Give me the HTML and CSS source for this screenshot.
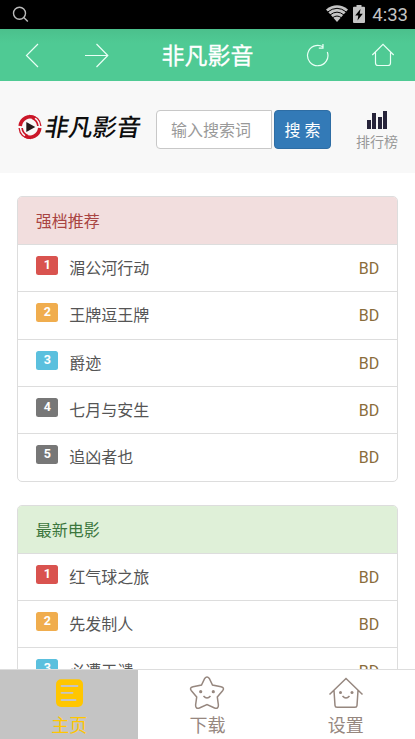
FILE: index.html
```html
<!DOCTYPE html>
<html lang="zh-CN">
<head>
<meta charset="utf-8">
<meta name="viewport" content="width=device-width, initial-scale=1">
<title>非凡影音</title>
<link rel="stylesheet" href="styles.css">
</head>
<body>
<div class="app">
  <header class="status">
    <svg class="status-search" width="18" height="18" viewBox="0 0 18 18"><circle cx="7.500" cy="7.200" r="6" /><path d="M11.800 11.500L15.800 15.400" /></svg>
    <div class="status-right">
      <svg width="22" height="17" viewBox="0 0 22 17">
        <path fill="#c4c4c4" d="M0 4.500Q11-3.800 22 4.500L11 17Z"/>
        <path fill="none" stroke="#000" stroke-width="1" d="M1.500 7.100Q11-.500 20.500 7.100M4 10Q11 4.300 18 10M6.500 12.800Q11 9.300 15.500 12.800"/>
      </svg>
      <svg class="battery" width="12" height="18" viewBox="0 0 12 18">
        <path fill="#c4c4c4" d="M3.500 0H8.500V1.700H11Q12 1.700 12 2.700V17Q12 18 11 18H1Q0 18 0 17V2.700Q0 1.700 1 1.700H3.500Z"/>
        <path fill="#000" d="M7.500 4L2.200 10.500H5.300L4.500 15.500L9.800 8.800H6.700Z"/>
      </svg>
      <span class="clock">4:33</span>
    </div>
  </header>

  <nav class="topbar">
    <div class="topbar-side">
      <svg width="16" height="26" viewBox="0 0 16 26"><path d="M14 2L2.500 13.500L14 25"/></svg>
      <svg class="forward" width="26" height="26" viewBox="0 0 26 26"><path d="M1 13.500H24M12.500 2L23.800 13.500L12.500 25"/></svg>
    </div>
    <h1>非凡影音</h1>
    <div class="topbar-side topbar-end">
      <svg width="24" height="26" viewBox="0 0 24 26"><path d="M21.300 10A10.200 10.200 0 1 1 17 4.800"/><path class="solid" d="M17.600 2V6.800H12.800V5.600H16.300V2Z"/></svg>
      <svg class="house" width="24" height="26" viewBox="0 0 24 26"><path d="M1.300 13L12 2.300L22.700 13M4.500 10.500V21Q4.500 23.500 7 23.500H17Q19.500 23.500 19.500 21V10.500"/></svg>
    </div>
  </nav>

  <section class="search">
    <div class="brand">
      <svg width="24" height="26" viewBox="0 0 24 26">
        <g fill="none" stroke="#cb1729">
          <path stroke-width="3.600" d="M2.200 12A9.800 10.400 0 0 1 17 4.300M21.800 14A9.800 10.400 0 0 1 7 21.700"/>
          <path stroke-width="1.300" d="M11 1.300Q22 2 22.900 12M13 24.700Q2 24 1.100 14"/>
          <path stroke-width="1.700" d="M14 4.300Q19.300 6.500 19.900 12M10 21.700Q4.700 19.500 4.100 14"/>
        </g>
        <path fill="#24191a" d="M8.300 8L17.300 13L8.300 18Z"/>
      </svg>
      <span class="brand-name">非凡影音</span>
    </div>
    <div class="field">输入搜索词</div>
    <button class="go">搜 索</button>
    <div class="rank-link">
      <svg width="20" height="18" viewBox="0 0 20 18"><path fill="#27243a" d="M0 9H4V18H0ZM5 2H9V18H5ZM11 6H15V18H11ZM16 0H20V18H16Z"/></svg>
      <span>排行榜</span>
    </div>
  </section>

  <main class="content">
    <section class="panel">
      <h2 class="danger">强档推荐</h2>
      <ul>
        <li><b class="badge n1">1</b><span>湄公河行动</span><i>BD</i></li>
        <li><b class="badge n2">2</b><span>王牌逗王牌</span><i>BD</i></li>
        <li><b class="badge n3">3</b><span>爵迹</span><i>BD</i></li>
        <li><b class="badge">4</b><span>七月与安生</span><i>BD</i></li>
        <li><b class="badge">5</b><span>追凶者也</span><i>BD</i></li>
      </ul>
    </section>
    <section class="panel">
      <h2 class="success">最新电影</h2>
      <ul>
        <li><b class="badge n1">1</b><span>红气球之旅</span><i>BD</i></li>
        <li><b class="badge n2">2</b><span>先发制人</span><i>BD</i></li>
        <li><b class="badge n3">3</b><span>必遭天谴</span><i>BD</i></li>
      </ul>
    </section>
  </main>

  <footer class="tabs">
    <div class="tab active">
      <svg width="36" height="36" viewBox="0 0 36 36"><rect x="5" y="4.300" width="27" height="27.700" rx="5" fill="#ffc600"/><path stroke="#c4c4c4" stroke-width="1.800" stroke-linecap="round" d="M10.500 11H26.500M10.500 17.800H21.500M10.500 25H24.500"/></svg>
      <span>主页</span>
    </div>
    <div class="tab">
      <svg class="line" width="36" height="36" viewBox="0 0 36 36"><path d="M15.700 3.500Q18 .500 20.300 3.500L23.500 10L32 11.700Q36 12.800 33.600 15.800L28.300 22L29.400 30Q29.500 34.300 25.600 33L18 29.500L10.400 33Q6.500 34.300 6.600 30L7.700 22L2.400 15.800Q0 12.800 4 11.700L12.500 10Z"/><path d="M14.500 21Q18 25 21.500 21"/><circle cx="11.700" cy="16.700" r="1.600"/><circle cx="24.300" cy="16.700" r="1.600"/></svg>
      <span>下载</span>
    </div>
    <div class="tab">
      <svg class="line" width="36" height="36" viewBox="0 0 36 36"><path d="M1.500 19.500L18 3.500L34.500 19.500M6 15.500L7 30.500Q7.100 32.300 9 32.300H27Q28.900 32.300 29 30.500L30 15.500M14.500 21Q18 25 21.500 21"/><circle cx="12.500" cy="17.500" r="1.500"/><circle cx="24" cy="17.500" r="1.500"/></svg>
      <span>设置</span>
    </div>
  </footer>
</div>
</body>
</html>
```
FILE: styles.css
```css
* { box-sizing: border-box; }
body {
  margin: 0;
  font-family: Roboto, "Noto Sans CJK SC", sans-serif;
  background: #fff;
}
h1, h2, ul { margin: 0; padding: 0; font-weight: 400; }
svg { display: block; flex: none; }
.app { height: 739px; display: flex; flex-direction: column; overflow: hidden; }

.status {
  flex: 0 0 29px;
  display: flex;
  justify-content: space-between;
  padding: 0 7px 0 12px;
  background: #000;
  color: #c4c4c4;
}
.status-search { margin-top: 6px; fill: none; stroke: #bbb; stroke-width: 1.400; }
.status-right { display: flex; align-items: flex-start; padding-top: 5px; }
.battery { margin-left: 5px; }
.clock { margin: -1px 0 0 7px; font-size: 18.500px; line-height: 22px; }

.topbar {
  flex: 0 0 52px;
  display: flex;
  align-items: center;
  justify-content: space-between;
  padding: 0 20px 0 24px;
  background: linear-gradient(#4bc08c, #4fca94 14px);
  color: #fff;
}
.topbar svg { fill: none; stroke: #e9fff5; stroke-width: 1.200; }
.topbar .solid { fill: #e9fff5; stroke: none; }
.topbar-side { flex: 1; display: flex; }
.topbar-side .forward { margin-left: 44px; }
.topbar-end { justify-content: flex-end; }
.topbar-end .house { margin-left: 41px; }
.topbar h1 {
  flex: none;
  font-size: 23px;
  line-height: 34px;
  margin-right: 4px;
  padding-top: 4px;
  -webkit-text-stroke: 0.300px #fff;
}

.search {
  flex: 0 0 92px;
  display: flex;
  align-items: flex-start;
  padding: 29px 15px 0 18px;
  background: #f8f8f8;
}
.brand { display: flex; width: 138px; padding-top: 4px; }
.brand-name {
  margin: 1px 0 0 3px;
  font-size: 24px;
  line-height: 26px;
  font-weight: 500;
  color: #0d0d0d;
  transform: skewX(-10deg);
  white-space: nowrap;
}
.field {
  width: 116px;
  height: 39px;
  padding-left: 14px;
  border: 1px solid #c8c8c8;
  border-radius: 4px 0 0 4px;
  background: #fff;
  font-size: 16px;
  line-height: 39px;
  color: #999;
}
.go {
  width: 57px;
  height: 39px;
  margin-left: 2px;
  padding: 0 0 2px;
  border: 1px solid #2e6da4;
  border-radius: 4px;
  background: #337ab7;
  color: #fff;
  font: inherit;
  font-size: 16px;
}
.rank-link {
  flex: 1;
  display: flex;
  flex-direction: column;
  align-items: center;
  margin-left: 23px;
  padding-top: 1px;
  font-size: 14px;
  line-height: 26px;
  color: #999;
}

.content { flex: 1; min-height: 0; overflow: hidden; padding: 23.300px 17.300px 0; }
.panel {
  margin-bottom: 23.200px;
  border: 1px solid #ddd;
  border-radius: 5px;
  overflow: hidden;
}
.panel h2 { height: 46.800px; padding-left: 17.500px; font-size: 16px; line-height: 49px; }
.danger { background: #f2dede; color: #a94442; }
.success { background: #dff0d8; color: #3c763d; }
.panel li {
  display: flex;
  height: 47.300px;
  padding: 0 17.500px 0 18px;
  border-top: 1px solid #ddd;
  font-size: 16px;
  line-height: 48px;
  color: #555;
}
.panel li span { flex: 1; margin-left: 11px; }
.panel li i { font-style: normal; color: #8a6d3b; }
.badge {
  width: 22px;
  height: 19px;
  margin-top: 11px;
  border-radius: 2.500px;
  background: #777;
  color: #fff;
  font-size: 12.500px;
  line-height: 18px;
  text-align: center;
}
.n1 { background: #d9534f; }
.n2 { background: #f0ad4e; }
.n3 { background: #5bc0de; }

.tabs { flex: 0 0 70px; display: flex; border-top: 1px solid #ddd; background: #fff; }
.tab {
  flex: 1;
  display: flex;
  flex-direction: column;
  align-items: center;
  padding-top: 5px;
  font-size: 18px;
  line-height: 28px;
  color: #96877f;
}
.tab span { margin: 1px 0 -1px; }
.tab.active { background: #c4c4c4; color: #ffc600; }
.line { fill: none; stroke: #96877f; stroke-width: 1.500; }
.line circle { fill: #96877f; stroke: none; }
```
